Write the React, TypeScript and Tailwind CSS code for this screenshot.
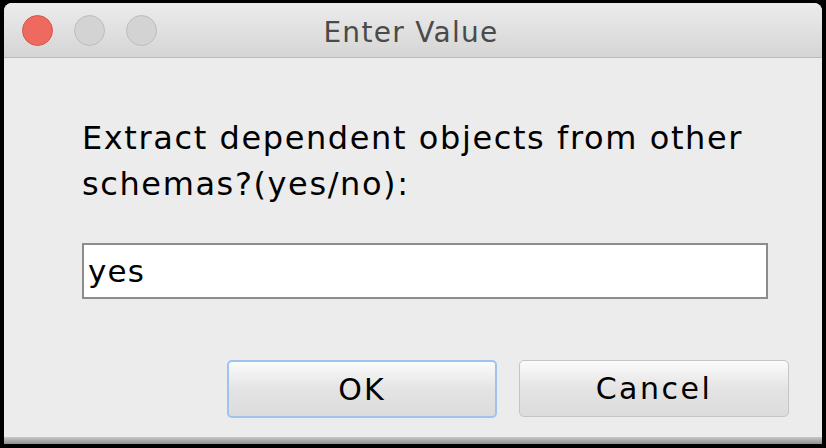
export default function App() {
  return (
    <div className="w-[826px] h-[448px] bg-black pt-[3px] pl-[4px] pr-[4px] pb-[4px] overflow-hidden">
      <div className="w-[818px] h-[441px] bg-[#ececec] rounded-t-[8px] overflow-hidden flex flex-col">
        <div className="h-[55px] shrink-0 bg-gradient-to-b from-[#ececec] to-[#d5d5d5] border-b border-[#b9b9b9] relative flex items-center">
          <div className="flex items-center gap-[21px] pl-[18px]">
            <div className="w-[31px] h-[31px] rounded-full bg-[#ee6a5e] border border-[#d5564b]" />
            <div className="w-[31px] h-[31px] rounded-full bg-[#d3d3d3] border border-[#bdbdbd]" />
            <div className="w-[31px] h-[31px] rounded-full bg-[#d3d3d3] border border-[#bdbdbd]" />
          </div>
          <div className="absolute inset-0 flex items-center justify-center pr-[4px] pt-[5px] text-[28px] tracking-[1.3px] text-[#4a4a4a] font-['DejaVu_Sans',sans-serif]">
            Enter Value
          </div>
        </div>
        <div className="flex-1 flex flex-col px-[78px] pt-[57px] font-['DejaVu_Sans',sans-serif] text-black">
          <div className="text-[32px] leading-[46px] tracking-[1.6px]">
            Extract dependent objects from other
            <br />
            schemas?(yes/no):
          </div>
          <div className="mt-[36px] w-[686px] h-[56px] bg-white border-2 border-[#8c8c8c] flex items-center px-[4px] text-[31px] tracking-[1.2px]">
            yes
          </div>
          <div className="mt-[61px] flex justify-end gap-[22px] -mr-[45px]">
            <button className="w-[270px] h-[58px] rounded-[5px] border-2 border-[#9ec3ee] bg-gradient-to-b from-[#fbfbfb] via-[#e4e4e4] to-[#dcdcdc] text-[30px] tracking-[2px] text-black flex items-center justify-center">
              OK
            </button>
            <button className="w-[270px] h-[57px] rounded-[5px] border border-[#c4c4c4] bg-gradient-to-b from-[#fbfbfb] via-[#e4e4e4] to-[#dcdcdc] text-[30px] tracking-[2.5px] text-black flex items-center justify-center">
              Cancel
            </button>
          </div>
        </div>
        <div className="h-[7px] shrink-0 bg-gradient-to-b from-[#c8c8c8] to-[#8f8f8f]" />
      </div>
    </div>
  );
}
